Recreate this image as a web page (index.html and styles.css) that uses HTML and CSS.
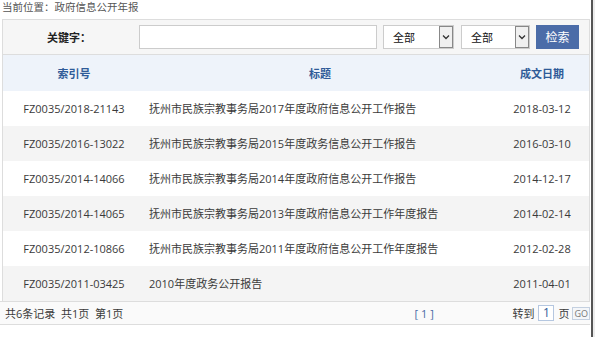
FILE: index.html
```html
<!DOCTYPE html>
<html lang="zh-CN">
<head>
<meta charset="utf-8">
<title>政府信息公开年报</title>
<link rel="stylesheet" href="styles.css">
</head>
<body>
<div class="page">
  <div class="crumb">当前位置：政府信息公开年报</div>
  <div class="box">
    <div class="search">
      <span class="label">关键字：</span>
      <span class="kw"></span>
      <span class="sel sel1"><span class="sel-text">全部</span><span class="arrow"><svg width="8" height="6" viewBox="0 0 8 6"><path d="M1 1.5 L4 4.5 L7 1.5" fill="none" stroke="#333" stroke-width="1.3"/></svg></span></span>
      <span class="sel sel2"><span class="sel-text">全部</span><span class="arrow"><svg width="8" height="6" viewBox="0 0 8 6"><path d="M1 1.5 L4 4.5 L7 1.5" fill="none" stroke="#333" stroke-width="1.3"/></svg></span></span>
      <span class="btn">检索</span>
    </div>
    <div class="row head">
      <span class="c1">索引号</span>
      <span class="c2 center">标题</span>
      <span class="c3">成文日期</span>
    </div>
    <div class="row">
      <span class="c1">FZ0035/2018-21143</span>
      <span class="c2">抚州市民族宗教事务局2017年度政府信息公开工作报告</span>
      <span class="c3">2018-03-12</span>
    </div>
    <div class="row alt">
      <span class="c1">FZ0035/2016-13022</span>
      <span class="c2">抚州市民族宗教事务局2015年度政务信息公开工作报告</span>
      <span class="c3">2016-03-10</span>
    </div>
    <div class="row">
      <span class="c1">FZ0035/2014-14066</span>
      <span class="c2">抚州市民族宗教事务局2014年度政府信息公开工作报告</span>
      <span class="c3">2014-12-17</span>
    </div>
    <div class="row alt">
      <span class="c1">FZ0035/2014-14065</span>
      <span class="c2">抚州市民族宗教事务局2013年度政府信息公开工作年度报告</span>
      <span class="c3">2014-02-14</span>
    </div>
    <div class="row">
      <span class="c1">FZ0035/2012-10866</span>
      <span class="c2">抚州市民族宗教事务局2011年度政府信息公开工作年度报告</span>
      <span class="c3">2012-02-28</span>
    </div>
    <div class="row alt">
      <span class="c1">FZ0035/2011-03425</span>
      <span class="c2">2010年度政务公开报告</span>
      <span class="c3">2011-04-01</span>
    </div>
  </div>
  <div class="pager">
    <span class="info">共6条记录&nbsp;&nbsp;共1页&nbsp;&nbsp;第1页</span>
    <span class="pages">[ 1 ]</span>
    <span class="jump">转到 <span class="pnum">1</span> 页 <span class="go">GO</span></span>
  </div>
</div>
</body>
</html>
```
FILE: styles.css
```css
html {
  background: #ececec;
}
html, body {
  margin: 0;
  padding: 0;
}
body {
  font-family: "Open Sans", "Noto Sans CJK SC", sans-serif;
  font-size: 11px;
  line-height: 15px;
  color: #3a3a3a;
}
.page {
  width: 591px;
  min-height: 337px;
  background: #fff;
  border-right: 2px solid #555;
}
.crumb {
  height: 19px;
  line-height: 14px;
  padding-left: 2px;
  color: #555;
  font-size: 10.5px;
}
.box {
  margin-left: 2px;
  width: 588px;
  box-sizing: border-box;
  border: 1px solid #ddd;
  border-bottom: none;
}
.search {
  height: 34px;
  background: #f6f6f6;
  border-bottom: 1px solid #ddd;
  display: flex;
  align-items: center;
}
.label {
  font-weight: bold;
  color: #222;
  margin-left: 44px;
  width: 92px;
}
.kw {
  width: 236px;
  height: 22px;
  background: #fff;
  border: 1px solid #ccc;
}
.sel {
  height: 22px;
  background: #fff;
  border: 1px solid #ccc;
  display: flex;
  align-items: center;
  justify-content: space-between;
}
.sel1 { width: 69px; margin-left: 6px; }
.sel2 { width: 67px; margin-left: 7px; }
.sel-text {
  padding-left: 9px;
  color: #111;
}
.arrow {
  width: 12px;
  height: 20px;
  border: 1px solid #888;
  background: #f0f0f0;
  display: flex;
  align-items: center;
  justify-content: center;
}
.btn {
  margin-left: 6px;
  width: 43px;
  height: 24px;
  background: #4b6ca8;
  color: #fff;
  font-size: 12px;
  display: flex;
  align-items: center;
  justify-content: center;
}
.row {
  height: 35px;
  display: flex;
  align-items: center;
  background: #fff;
}
.row.alt { background: #f4f4f4; }
.row.head {
  height: 36px;
  background: #eef3fa;
  color: #2f5b98;
  font-weight: bold;
}
.c1 {
  width: 142px;
  text-align: center;
  white-space: nowrap;
}
.c2 {
  width: 350px;
  padding-left: 4px;
  box-sizing: border-box;
  white-space: nowrap;
}
.c2.center { text-align: center; padding-left: 0; }
.c3 {
  width: 94px;
  text-align: center;
  white-space: nowrap;
}
.pager {
  width: 590px;
  height: 22px;
  border-top: 1px solid #ddd;
  border-bottom: 1px solid #ddd;
  background: #fafafa;
  display: flex;
  align-items: center;
  white-space: nowrap;
}
.info {
  padding-left: 5px;
  width: 410px;
}
.pages {
  color: #4a6aa5;
  width: 98px;
}
.jump {
  display: flex;
  align-items: center;
  gap: 3px;
}
.pnum {
  width: 14px;
  height: 14px;
  border: 1px solid #b5c7e0;
  background: #fff;
  color: #2f5b98;
  text-align: center;
  line-height: 14px;
  font-size: 12px;
  margin: 0 1px;
}
.go {
  font-size: 9px;
  color: #777;
  border: 1px solid #c4d0e0;
  background: #f4f6f9;
  line-height: 11px;
  padding: 0 1px;
}
```
